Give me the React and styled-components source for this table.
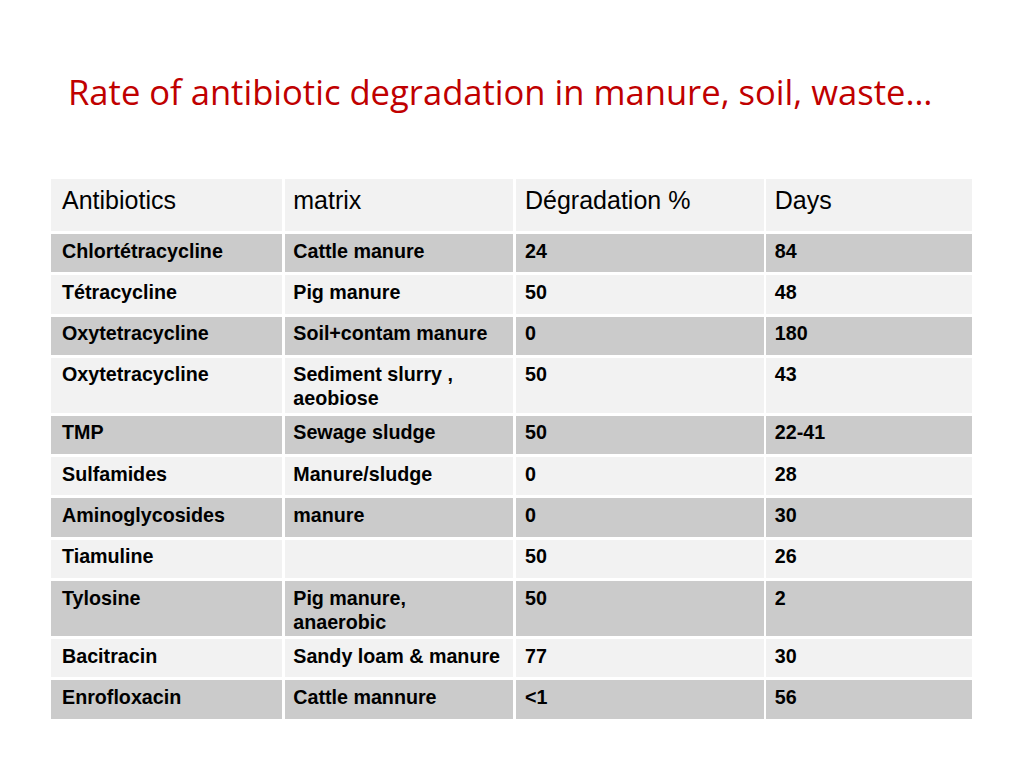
import React from "react";
import styled, { createGlobalStyle } from "styled-components";

const Global = createGlobalStyle`
  html, body { margin: 0; padding: 0; background: #ffffff; }
  body { width: 1024px; height: 768px; overflow: hidden; }
`;

const Page = styled.div`
  box-sizing: border-box;
  width: 1024px;
  height: 768px;
  padding: 72px 0 0 51px;
  background: #ffffff;
  display: flex;
  flex-direction: column;
`;

const Title = styled.h1`
  margin: 0 0 0 17px;
  font-family: "Open Sans", Lato, sans-serif;
  font-weight: 400;
  font-size: 34.6px;
  line-height: 40px;
  color: #c00000;
  white-space: nowrap;
  font-variant-ligatures: none;
`;

const Table = styled.div`
  margin-top: 67px;
  display: grid;
  grid-template-columns: 231px 228px 248px 206px;
  grid-template-rows: 52px;
  grid-auto-rows: minmax(38.3px, auto);
  column-gap: 2.75px;
  row-gap: 3px;
  font-family: "Liberation Sans", Arial, sans-serif;
  color: #000000;
`;

const pads = [11, 8.5, 9.5, 8.5];

const HeadCell = styled.div`
  box-sizing: border-box;
  background: #f2f2f2;
  padding: 6px 4px 0 ${(p) => pads[p.$col]}px;
  font-size: 25px;
  line-height: 30px;
  font-weight: 400;
`;

const Cell = styled.div`
  box-sizing: border-box;
  background: ${(p) => (p.$dark ? "#cbcbcb" : "#f2f2f2")};
  padding: 4.5px 3px 2.5px ${(p) => pads[p.$col]}px;
  font-size: 19.7px;
  line-height: 24px;
  font-weight: 700;
  white-space: pre-line;
`;

const headers = ["Antibiotics", "matrix", "Dégradation %", "Days"];

const rows = [
  ["Chlortétracycline", "Cattle manure", "24", "84"],
  ["Tétracycline", "Pig manure", "50", "48"],
  ["Oxytetracycline", "Soil+contam manure", "0", "180"],
  ["Oxytetracycline", "Sediment slurry ,\naeobiose", "50", "43"],
  ["TMP", "Sewage sludge", "50", "22-41"],
  ["Sulfamides", "Manure/sludge", "0", "28"],
  ["Aminoglycosides", "manure", "0", "30"],
  ["Tiamuline", "", "50", "26"],
  ["Tylosine", "Pig manure,\nanaerobic", "50", "2"],
  ["Bacitracin", "Sandy loam & manure", "77", "30"],
  ["Enrofloxacin", "Cattle mannure", "<1", "56"],
];

export default function App() {
  return (
    <>
      <Global />
      <Page>
        <Title>Rate of antibiotic degradation in manure, soil, waste…</Title>
        <Table>
          {headers.map((h, ci) => (
            <HeadCell key={h} $col={ci}>
              {h}
            </HeadCell>
          ))}
          {rows.map((r, ri) =>
            r.map((c, ci) => (
              <Cell key={`${ri}-${ci}`} $col={ci} $dark={ri % 2 === 0}>
                {c}
              </Cell>
            ))
          )}
        </Table>
      </Page>
    </>
  );
}
